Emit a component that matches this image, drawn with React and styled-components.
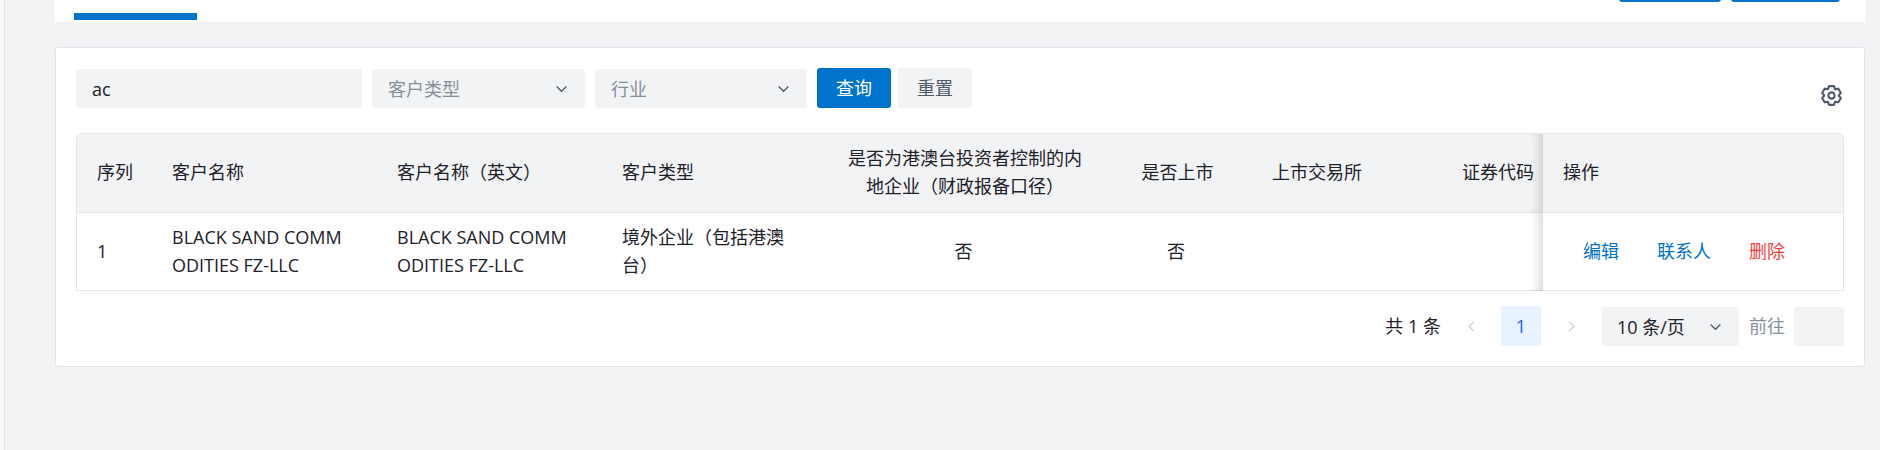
import React, { useState } from 'react'
import styled, { createGlobalStyle } from 'styled-components'

const columns = [
  { key: 'index', title: '序列', width: 75 },
  { key: 'name', title: '客户名称', width: 225 },
  { key: 'nameEn', title: '客户名称（英文）', width: 225 },
  { key: 'type', title: '客户类型', width: 225 },
  { key: 'hmt', title: '是否为港澳台投资者控制的内地企业（财政报备口径）', width: 275, align: 'center' },
  { key: 'listed', title: '是否上市', width: 150, align: 'center' },
  { key: 'exchange', title: '上市交易所', width: 190 },
  { key: 'code', title: '证券代码', width: 200 },
]

const rows = [
  {
    index: 1,
    name: 'BLACK SAND COMMODITIES FZ-LLC',
    nameEn: 'BLACK SAND COMMODITIES FZ-LLC',
    type: '境外企业（包括港澳台）',
    hmt: '否',
    listed: '否',
    exchange: '',
    code: '',
  },
]

const DownIcon = () => (
  <svg width="15" height="15" viewBox="0 0 48 48" fill="none" stroke="currentColor" strokeWidth="4">
    <path d="M39.6 17.443 24.043 33 8.487 17.443" />
  </svg>
)

const LeftIcon = () => (
  <svg width="15" height="15" viewBox="0 0 48 48" fill="none" stroke="currentColor" strokeWidth="4">
    <path d="M32 8.4 16.444 23.956 32 39.513" />
  </svg>
)

const RightIcon = () => (
  <svg width="15" height="15" viewBox="0 0 48 48" fill="none" stroke="currentColor" strokeWidth="4">
    <path d="m16 39.513 15.556-15.557L16 8.4" />
  </svg>
)

const SettingIcon = () => (
  <svg width="25" height="25" viewBox="0 0 48 48" fill="none" stroke="currentColor" strokeWidth="4">
    <path d="M18.797 6.732A1 1 0 0 1 19.76 6h8.48a1 1 0 0 1 .964.732l1.285 4.628a1 1 0 0 0 1.213.7l4.651-1.2a1 1 0 0 1 1.116.468l4.24 7.344a1 1 0 0 1-.153 1.2L38.193 23.3a1 1 0 0 0 0 1.402l3.364 3.427a1 1 0 0 1 .153 1.2l-4.24 7.344a1 1 0 0 1-1.116.468l-4.65-1.2a1 1 0 0 0-1.214.7l-1.285 4.628a1 1 0 0 1-.964.732h-8.48a1 1 0 0 1-.963-.732L17.51 36.64a1 1 0 0 0-1.213-.7l-4.65 1.2a1 1 0 0 1-1.116-.468l-4.24-7.344a1 1 0 0 1 .153-1.2L9.809 24.7a1 1 0 0 0 0-1.402l-3.364-3.427a1 1 0 0 1-.153-1.2l4.24-7.344a1 1 0 0 1 1.116-.468l4.65 1.2a1 1 0 0 0 1.213-.7l1.286-4.628Z" />
    <path d="M30 24a6 6 0 1 1-12 0 6 6 0 0 1 12 0Z" />
  </svg>
)

function Dropdown({ label, options, width, placeholder }) {
  const [value, setValue] = useState(placeholder ? '' : options[0])

  return (
    <SelectBox $width={width}>
      <Select aria-label={label} value={value} $empty={!value} onChange={e => setValue(e.target.value)}>
        {placeholder && <option value="">{placeholder}</option>}
        {options.map(option => <option key={option} value={option}>{option}</option>)}
      </Select>
      <DownIcon />
    </SelectBox>
  )
}

function App() {
  const [keyword, setKeyword] = useState('ac')
  const [jump, setJump] = useState('')

  return (
    <Page>
      <GlobalStyle />
      <Sider />
      <Main>
        <TopCard>
          <ActiveTab />
          <TopActions>
            <TopButton type="button" $width={102} />
            <TopButton type="button" $width={109} />
          </TopActions>
        </TopCard>

        <Card>
          <Toolbar>
            <Filters onSubmit={e => e.preventDefault()}>
              <TextInput aria-label="客户名称" $width={286} value={keyword} onChange={e => setKeyword(e.target.value)} />
              <Dropdown label="客户类型" placeholder="客户类型" width={213} options={['境外企业（包括港澳台）']} />
              <Dropdown label="行业" placeholder="行业" width={212} options={[]} />
              <Buttons>
                <Button type="submit" $primary>查询</Button>
                <Button type="button" onClick={() => setKeyword('')}>重置</Button>
              </Buttons>
            </Filters>
            <IconButton type="button" aria-label="设置"><SettingIcon /></IconButton>
          </Toolbar>

          <TableBox>
            <Table>
              <thead>
                <tr>
                  {columns.map(col => <Th key={col.key} $width={col.width} $align={col.align}>{col.title}</Th>)}
                  <FixedTh $width={300}>操作</FixedTh>
                </tr>
              </thead>
              <tbody>
                {rows.map(row => (
                  <tr key={row.index}>
                    {columns.map(col => <Td key={col.key} $align={col.align}>{row[col.key]}</Td>)}
                    <FixedTd>
                      <Actions>
                        <ActionLink href="#edit">编辑</ActionLink>
                        <ActionLink href="#contact">联系人</ActionLink>
                        <ActionLink href="#delete" $danger>删除</ActionLink>
                      </Actions>
                    </FixedTd>
                  </tr>
                ))}
              </tbody>
            </Table>
          </TableBox>

          <Pagination>
            <Total>共 {rows.length} 条</Total>
            <PageButton type="button" aria-label="上一页" disabled><LeftIcon /></PageButton>
            <PageButton type="button" $active>1</PageButton>
            <PageButton type="button" aria-label="下一页" disabled><RightIcon /></PageButton>
            <Dropdown label="每页条数" width={138} options={['10 条/页', '20 条/页', '50 条/页']} />
            <Jump>
              <JumpLabel htmlFor="jump">前往</JumpLabel>
              <TextInput id="jump" $width={50} value={jump} onChange={e => setJump(e.target.value)} />
            </Jump>
          </Pagination>
        </Card>
      </Main>
    </Page>
  )
}

export default App

const GlobalStyle = createGlobalStyle`
  * {
    box-sizing: border-box;
  }

  body {
    margin: 0;
    background: #f2f3f5;
    color: #1d2129;
  }

  body, input, select, button {
    font-family: "Open Sans", "Noto Sans CJK SC", sans-serif;
    font-size: 18px;
    line-height: 28px;
  }
`;

const Page = styled.div`
  display: flex;
  min-height: 100vh;
`;

const Sider = styled.aside`
  flex: none;
  width: 5px;
  background: #f7f8fa;
  border-right: 1px solid #e0e1e4;
`;

const Main = styled.main`
  flex: 1;
  min-width: 0;
  padding: 0 15px 0 50px;
`;

const TopCard = styled.header`
  display: flex;
  justify-content: space-between;
  height: 22px;
  padding: 0 25px 0 19px;
  background: #fff;
`;

const ActiveTab = styled.div`
  align-self: flex-end;
  width: 123px;
  height: 7px;
  margin-bottom: 2px;
  background: #0073cc;
`;

// only the bottom edge of these buttons is scrolled into view
const TopActions = styled.div`
  display: flex;
  align-items: flex-end;
  gap: 10px;
  height: 2px;
  overflow: hidden;
`;

const TopButton = styled.button`
  flex: none;
  width: ${props => props.$width}px;
  height: 40px;
  border: 0;
  border-radius: 3px;
  background: #0073cc;
`;

const Card = styled.section`
  margin-top: 25px;
  padding: 20px;
  background: #fff;
  border: 1px solid #e5e6eb;
  border-radius: 3px;
`;

const Toolbar = styled.div`
  display: flex;
  align-items: flex-end;
  justify-content: space-between;
  margin-bottom: 25px;
`;

const Filters = styled.form`
  display: flex;
  align-items: flex-end;
  gap: 10px;
`;

const TextInput = styled.input`
  width: ${props => props.$width}px;
  height: 39px;
  padding: 0 16px;
  border: 0;
  border-radius: 3px;
  background: #f2f3f5;
  color: #1d2129;
  outline: none;
`;

const SelectBox = styled.div`
  position: relative;
  width: ${props => props.$width}px;
  color: #4e5969;

  svg {
    position: absolute;
    top: 12px;
    right: 16px;
    pointer-events: none;
  }
`;

const Select = styled.select`
  display: block;
  width: 100%;
  height: 39px;
  padding: 0 36px 0 16px;
  border: 0;
  border-radius: 3px;
  background: #f2f3f5;
  color: ${props => (props.$empty ? '#86909c' : '#1d2129')};
  appearance: none;
  outline: none;
`;

const Buttons = styled.div`
  display: flex;
  gap: 7px;
`;

const Button = styled.button`
  width: 74px;
  height: 40px;
  padding: 0;
  border: 0;
  border-radius: 3px;
  background: ${props => (props.$primary ? '#0073cc' : '#f2f3f5')};
  color: ${props => (props.$primary ? '#fff' : '#4e5969')};
  cursor: pointer;
`;

const IconButton = styled.button`
  display: flex;
  padding: 0;
  border: 0;
  background: none;
  color: #4e5969;
  cursor: pointer;
`;

const TableBox = styled.div`
  overflow-x: auto;
  border: 1px solid #e5e6eb;
  border-bottom: 0;
  border-radius: 5px 5px 0 0;
  scrollbar-width: none;
`;

const Table = styled.table`
  width: 1865px;
  min-width: 100%;
  table-layout: fixed;
  border-collapse: separate;
  border-spacing: 0;
`;

const Th = styled.th`
  width: ${props => props.$width}px;
  height: 79px;
  padding: 9px 19px 11px 20px;
  background: #f2f3f5;
  border-bottom: 1px solid #e5e6eb;
  font-weight: 400;
  text-align: ${props => props.$align || 'left'};
`;

const Td = styled.td`
  height: 78px;
  padding: 9px 22px 11px 20px;
  background: #fff;
  border-bottom: 1px solid #e5e6eb;
  text-align: ${props => props.$align || 'left'};
  word-break: break-all;
`;

const FixedTh = styled(Th)`
  position: sticky;
  right: 0;

  &::before {
    content: "";
    position: absolute;
    top: 0;
    bottom: -1px;
    right: 100%;
    width: 13px;
    box-shadow: inset -8px 0 10px -4px rgba(0, 0, 0, 0.15);
  }
`;

const FixedTd = styled(Td)`
  position: sticky;
  right: 0;

  &::before {
    content: "";
    position: absolute;
    top: 0;
    bottom: -1px;
    right: 100%;
    width: 13px;
    box-shadow: inset -8px 0 10px -4px rgba(0, 0, 0, 0.15);
  }
`;

const Actions = styled.div`
  display: flex;
  gap: 38px;
  padding-left: 20px;
`;

const ActionLink = styled.a`
  color: ${props => (props.$danger ? '#f53f3f' : '#0073cc')};
  text-decoration: none;
`;

const Pagination = styled.div`
  display: flex;
  align-items: flex-end;
  justify-content: flex-end;
  gap: 10px;
  margin-top: 15px;
`;

const Total = styled.span`
  line-height: 40px;
`;

const PageButton = styled.button`
  display: flex;
  align-items: center;
  justify-content: center;
  width: 40px;
  height: 40px;
  padding: 0;
  border: 0;
  border-radius: 3px;
  background: ${props => (props.$active ? '#e8f3ff' : 'none')};
  color: ${props => (props.$active ? '#165dff' : '#c9cdd4')};
`;

const Jump = styled.div`
  display: flex;
  align-items: flex-end;
  gap: 9px;
`;

const JumpLabel = styled.label`
  line-height: 40px;
  color: #86909c;
`;
